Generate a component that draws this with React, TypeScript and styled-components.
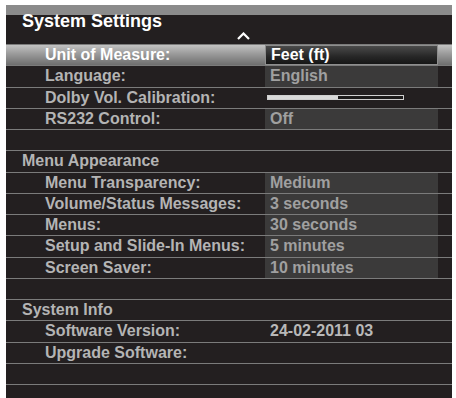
import styled, { createGlobalStyle } from 'styled-components';

const GlobalStyle = createGlobalStyle`
  html, body { margin: 0; padding: 0; background: #fff; }
  body { font-family: "Liberation Sans", Arial, Helvetica, sans-serif; }
`;

const colors = {
  panel: '#231f20',
  line: '#7b7b7b',
  label: '#b4b4b4',
  value: '#a0a0a0',
  box: '#3b3a3a',
};

interface Item {
  kind: 'section' | 'item' | 'blank',
  label?: string,
  value?: string,
  boxed?: boolean,
  slider?: number,
  selected?: boolean,
};

const items: Item[] = [
  { kind: 'item', label: 'Unit of Measure:', value: 'Feet (ft)', boxed: true, selected: true },
  { kind: 'item', label: 'Language:', value: 'English', boxed: true },
  { kind: 'item', label: 'Dolby Vol. Calibration:', slider: 0.52 },
  { kind: 'item', label: 'RS232 Control:', value: 'Off', boxed: true },
  { kind: 'blank' },
  { kind: 'section', label: 'Menu Appearance' },
  { kind: 'item', label: 'Menu Transparency:', value: 'Medium', boxed: true },
  { kind: 'item', label: 'Volume/Status Messages:', value: '3 seconds', boxed: true },
  { kind: 'item', label: 'Menus:', value: '30 seconds', boxed: true },
  { kind: 'item', label: 'Setup and Slide-In Menus:', value: '5 minutes', boxed: true },
  { kind: 'item', label: 'Screen Saver:', value: '10 minutes', boxed: true },
  { kind: 'blank' },
  { kind: 'section', label: 'System Info' },
  { kind: 'item', label: 'Software Version:', value: '24-02-2011 03' },
  { kind: 'item', label: 'Upgrade Software:' },
  { kind: 'blank' },
];

const Panel = styled.div`
  margin: 5px 4px 0 6px;
  width: 446px;
  min-height: 393px;
  background: ${colors.panel};
  display: flex;
  flex-direction: column;
`;

const Header = styled.div`
  height: 39px;
  display: flex;
  flex-direction: column;
  background: linear-gradient(#8b8b8b 0, #8b8b8b 10px, ${colors.panel} 10px);
`;

const Title = styled.h1`
  margin: 0;
  padding: 6px 0 0 16px;
  font-size: 18px;
  line-height: 21px;
  font-weight: bold;
  color: #fff;
`;

const Caret = styled.svg`
  margin: 0 0 0 231px;
  width: 13px;
  height: 8px;
`;

const Row = styled.div<{ $selected?: boolean }>`
  box-sizing: border-box;
  height: 21.25px;
  display: grid;
  grid-template-columns: 259px 173px 1fr;
  align-items: stretch;
  border-top: 1px solid ${colors.line};
  background: ${p => p.$selected
    ? 'linear-gradient(#c2c2c2, #9a9a9a 45%, #6e6e6e)'
    : 'transparent'};
  &:first-child { border-top-color: #555; }
`;

const Label = styled.div<{ $section?: boolean, $selected?: boolean }>`
  display: flex;
  align-items: center;
  padding-left: ${p => p.$section ? '16px' : '39px'};
  font-size: 16px;
  font-weight: bold;
  white-space: nowrap;
  color: ${p => p.$selected ? '#fff' : colors.label};
`;

const Value = styled.div<{ $boxed?: boolean, $selected?: boolean }>`
  display: flex;
  align-items: center;
  padding-left: 5px;
  font-size: 16px;
  font-weight: bold;
  white-space: nowrap;
  color: ${p => p.$selected ? '#fff' : p.$boxed ? colors.value : '#b8b8b8'};
  background: ${p => p.$selected
    ? 'linear-gradient(#4a4a4a, #262626 60%, #161616)'
    : p.$boxed ? colors.box : 'transparent'};
  border: ${p => p.$selected ? '1px solid #8e8e8e' : 'none'};
  box-sizing: border-box;
`;

const SliderCell = styled.div`
  display: flex;
  align-items: center;
  padding-left: 2px;
`;

const Track = styled.div`
  box-sizing: border-box;
  width: 137px;
  height: 5px;
  border: 1px solid #cfcfcf;
  background: #1c1a1a;
`;

const Fill = styled.div`
  height: 100%;
  background: #d9d9d9;
`;

const SettingRow = ({ item }: { item: Item }) => {
  if (item.kind === 'blank') return <Row />;
  if (item.kind === 'section') {
    return (
      <Row>
        <Label $section>{item.label}</Label>
      </Row>
    );
  }
  return (
    <Row $selected={item.selected}>
      <Label $selected={item.selected}>{item.label}</Label>
      { item.slider !== undefined
        ? (
          <SliderCell>
            <Track>
              <Fill style={{ width: `${item.slider * 100}%` }} />
            </Track>
          </SliderCell>
        )
        : <Value $boxed={item.boxed} $selected={item.selected}>{item.value}</Value> }
    </Row>
  );
};

const App = () => (
  <>
    <GlobalStyle />
    <Panel>
      <Header>
        <Title>System Settings</Title>
        <Caret viewBox="0 0 13 8">
          <path d="M1 7 L6.5 1.5 L12 7" fill="none" stroke="#fff" strokeWidth="2.2" />
        </Caret>
      </Header>
      { items.map((item, index) => <SettingRow key={`row-${index}`} item={item} />) }
      <Row />
    </Panel>
  </>
);

export default App;
